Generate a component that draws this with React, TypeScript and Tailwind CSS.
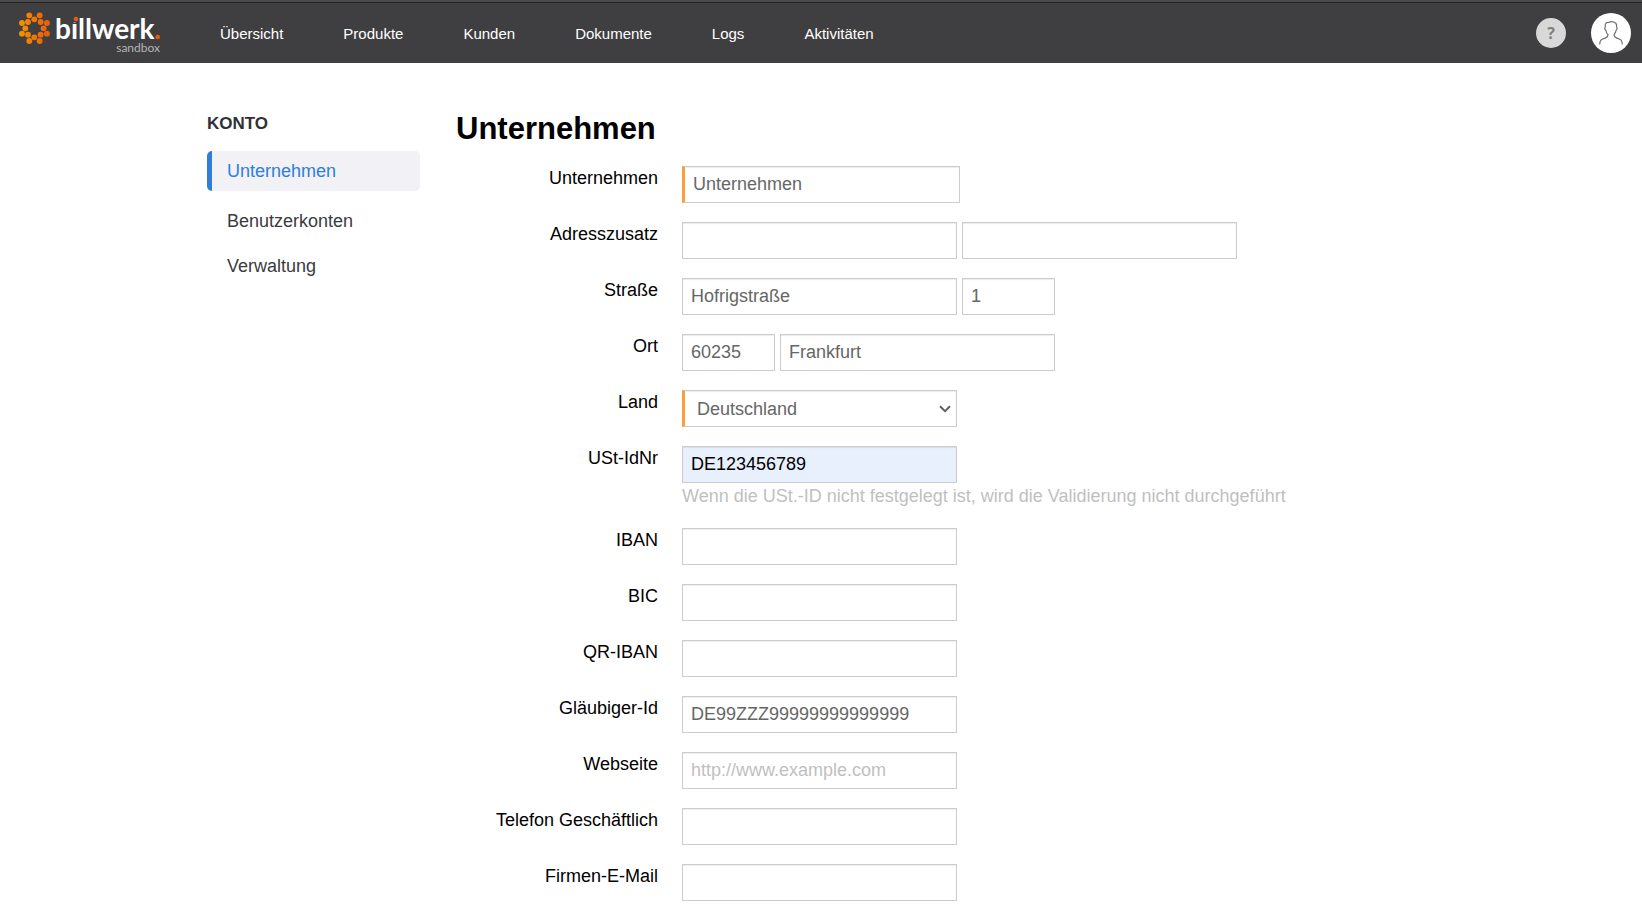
import type { ReactNode } from 'react';

const navItems = ['Übersicht', 'Produkte', 'Kunden', 'Dokumente', 'Logs', 'Aktivitäten'];

const logoDots: [number, number][] = [
  [58, 34], [89, 34], [73, 46], [36, 57], [54, 54], [92, 54], [111, 57], [46, 73],
  [101, 73], [36, 89], [54, 92], [92, 92], [111, 89], [73, 100], [58, 111], [89, 111],
];

function Logo() {
  return (
    <svg width="150" height="50" viewBox="0 0 150 50" role="img" aria-label="billwerk sandbox">
      <defs>
        <linearGradient id="dots" gradientUnits="userSpaceOnUse" x1="27" y1="0" x2="120" y2="0">
          <stop offset="0" stopColor="#f59400" />
          <stop offset="1" stopColor="#ea5a0c" />
        </linearGradient>
      </defs>
      <g transform="translate(0 -8) scale(0.3333)" fill="url(#dots)">
        {logoDots.map(([x, y]) => (
          <circle key={`${x}-${y}`} cx={x} cy={y + 12} r="8.8" />
        ))}
      </g>
      <text x="45" y="31" fill="#fff" fontFamily="Lato, sans-serif" fontWeight="700" fontSize="28">
        billwerk
      </text>
      <rect x="62" y="8" width="7" height="6" fill="#3f3f41" />
      <circle cx="66" cy="11" r="2.3" fill="#ea5a0c" />
      <circle cx="147.700" cy="29" r="2.3" fill="#ea5a0c" />
      <text x="150" y="44" textAnchor="end" fill="#b4b4b4" fontFamily="Lato, sans-serif" fontWeight="400" fontSize="12">
        sandbox
      </text>
    </svg>
  );
}

function Header() {
  return (
    <header className="border-t-2 border-[#4b4b4b] bg-[#3f3f41]">
      <div className="flex h-[61px] items-center border-t border-[#222] pr-[11px] pl-[10px]">
        <a href="#" className="shrink-0">
          <Logo />
        </a>
        <nav className="ml-[60px] flex gap-[60px] pt-0.5 text-[15px] text-white">
          {navItems.map((item) => (
            <a key={item} href="#">
              {item}
            </a>
          ))}
        </nav>
        <div className="ml-auto flex items-center gap-[25px]">
          <button
            type="button"
            aria-label="Hilfe"
            className="flex size-[30px] items-center justify-center rounded-full bg-[#d8d8d8] font-['Open_Sans',sans-serif] text-base font-bold text-[#808080]"
          >
            ?
          </button>
          <button type="button" aria-label="Benutzerkonto" className="flex size-10 items-center justify-center rounded-full bg-white">
            <svg width="24" height="24" viewBox="0 0 24 24" fill="none" stroke="#707070" strokeWidth="1.2">
              <path d="M.7 23.500C.8 18.600 2.600 18.400 6.200 17.100 8.300 16.400 9 15.600 9 13.600 7.700 12.400 7.200 11 6.900 9.300 5.700 8.600 5.500 6.500 6.300 6 5.800 2.700 7.200 1.200 9.600 1.500 12 .2 18.600.1 17.500 6 18.500 6.600 18.100 8.700 17.100 9.300 16.800 11 16.200 12.400 15 13.600 15 15.600 15.700 16.400 17.800 17.100 21.400 18.400 23.200 18.600 23.300 23.500" />
            </svg>
          </button>
        </div>
      </div>
    </header>
  );
}

function Sidebar() {
  return (
    <aside className="w-[213px] shrink-0 text-lg text-[#3a3b40]">
      <h2 className="pt-px text-[17px] leading-6 font-bold text-[#303136]">KONTO</h2>
      <nav className="mt-[15px]">
        <a
          href="#"
          aria-current="page"
          className="mb-[7px] flex h-10 items-center rounded-[5px] border-l-[5px] border-[#2f7ed8] bg-[#f1f1f6] pl-[15px] text-[#2f7ed8]"
        >
          Unternehmen
        </a>
        <a href="#" className="flex h-[45px] items-center pl-5">
          Benutzerkonten
        </a>
        <a href="#" className="flex h-[45px] items-center pl-5">
          Verwaltung
        </a>
      </nav>
    </aside>
  );
}

const control = 'h-[37px] border border-[#ccc] px-2 shadow-[inset_0_1px_1px_rgba(0,0,0,0.08)] placeholder:text-[#bfbfbf] focus:outline-none';
const plain = `${control} bg-white text-[#666]`;

function Row({ id, label, children, help }: { id: string; label: string; children: ReactNode; help?: string }) {
  return (
    <div className="flex gap-6">
      <label htmlFor={id} className="w-[202px] shrink-0 text-right leading-6">
        {label}
      </label>
      <div className="min-w-0">
        <div className="flex gap-[5px]">{children}</div>
        {help && <p className="leading-[26px] text-[#bfbfbf]">{help}</p>}
      </div>
    </div>
  );
}

function TextRow({ id, label, value, placeholder }: { id: string; label: string; value?: string; placeholder?: string }) {
  return (
    <Row id={id} label={label}>
      <input id={id} type="text" defaultValue={value} placeholder={placeholder} className={`${plain} w-[275px]`} />
    </Row>
  );
}

export default function App() {
  return (
    <div className="min-h-screen bg-white font-['Liberation_Sans',Arial,sans-serif] text-black">
      <Header />
      <div className="mx-auto flex max-w-[1228px] items-start gap-9 pt-12">
        <Sidebar />
        <main className="min-w-0 flex-1 pb-4">
          <h1 className="text-[31px] leading-9 font-bold">Unternehmen</h1>
          <form className="mt-[19px] flex flex-col gap-[19px] text-lg">
            <Row id="company" label="Unternehmen">
              <input
                id="company"
                type="text"
                defaultValue="Unternehmen"
                className={`${plain} w-[278px] border-l-3 border-l-[#ff9d3c]`}
              />
            </Row>
            <Row id="addition" label="Adresszusatz">
              <input id="addition" type="text" className={`${plain} w-[275px]`} />
              <input aria-label="Adresszusatz 2" type="text" className={`${plain} w-[275px]`} />
            </Row>
            <Row id="street" label="Straße">
              <input id="street" type="text" defaultValue="Hofrigstraße" className={`${plain} w-[275px]`} />
              <input aria-label="Hausnummer" type="text" defaultValue="1" className={`${plain} w-[93px]`} />
            </Row>
            <Row id="zip" label="Ort">
              <input id="zip" type="text" defaultValue="60235" className={`${plain} w-[93px]`} />
              <input aria-label="Stadt" type="text" defaultValue="Frankfurt" className={`${plain} w-[275px]`} />
            </Row>
            <Row id="country" label="Land">
              <div className="relative">
                <select
                  id="country"
                  className="h-[37px] w-[275px] appearance-none border border-l-3 border-[#ccc] border-l-[#ff9d3c] bg-white pr-8 pl-3 text-[#666] shadow-[inset_0_1px_1px_rgba(0,0,0,0.08)]"
                >
                  <option>Deutschland</option>
                </select>
                <svg
                  className="pointer-events-none absolute top-[15px] right-[6px]"
                  width="12"
                  height="8"
                  viewBox="0 0 12 8"
                  fill="none"
                  stroke="#606060"
                  strokeWidth="2"
                >
                  <path d="M1 1.200l5 5 5-5" />
                </svg>
              </div>
            </Row>
            <Row id="vat" label="USt-IdNr" help="Wenn die USt.-ID nicht festgelegt ist, wird die Validierung nicht durchgeführt">
              <input id="vat" type="text" defaultValue="DE123456789" className={`${control} w-[275px] bg-[#e8f0fe]`} />
            </Row>
            <TextRow id="iban" label="IBAN" />
            <TextRow id="bic" label="BIC" />
            <TextRow id="qriban" label="QR-IBAN" />
            <TextRow id="creditor" label="Gläubiger-Id" value="DE99ZZZ99999999999999" />
            <TextRow id="website" label="Webseite" placeholder="http://www.example.com" />
            <TextRow id="phone" label="Telefon Geschäftlich" />
            <TextRow id="email" label="Firmen-E-Mail" />
          </form>
        </main>
      </div>
    </div>
  );
}
